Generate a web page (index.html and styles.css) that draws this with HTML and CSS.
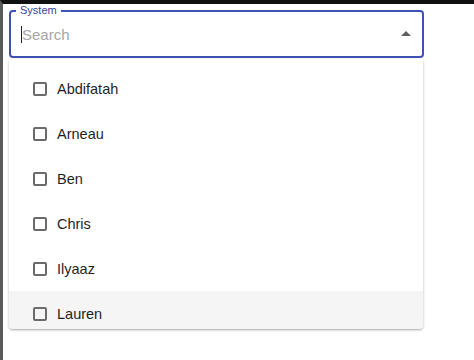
FILE: index.html
```html
<!DOCTYPE html>
<html>
<head>
<meta charset="utf-8">
<link rel="stylesheet" href="styles.css">
</head>
<body>
<div class="frame">
  <div class="field">
    <fieldset class="outline">
      <legend class="legend">System</legend>
      <div class="input-row">
        <span class="caret"></span>
        <span class="placeholder">Search</span>
        <svg class="arrow" width="24" height="24" viewBox="0 0 24 24"><path d="M7 14l5-5 5 5z" fill="#5f5f5f"/></svg>
      </div>
    </fieldset>
  </div>
  <div class="paper">
    <ul class="list">
      <li class="option"><span class="box"></span><span class="label">Abdifatah</span></li>
      <li class="option"><span class="box"></span><span class="label">Arneau</span></li>
      <li class="option"><span class="box"></span><span class="label">Ben</span></li>
      <li class="option"><span class="box"></span><span class="label">Chris</span></li>
      <li class="option"><span class="box"></span><span class="label">Ilyaaz</span></li>
      <li class="option hover"><span class="box"></span><span class="label">Lauren</span></li>
    </ul>
  </div>
</div>
</body>
</html>
```

FILE: styles.css
```css
html, body {
  margin: 0;
  padding: 0;
  background: #ffffff;
}
body {
  font-family: "Liberation Sans", Arial, sans-serif;
  width: 474px;
  height: 360px;
  overflow: hidden;
}
.frame {
  box-sizing: border-box;
  height: 360px;
  border-top: 4px solid #111111;
  border-left: 3px solid #5a5a5a;
  padding: 0 0 0 6px;
}
.field {
  width: 415px;
}
.outline {
  margin: 0;
  padding: 0 12px 0 10px;
  border: 2px solid #3f51b5;
  border-radius: 4px;
  height: 54px;
  box-sizing: border-box;
}
.legend {
  font-size: 11px;
  color: #34449a;
  padding: 0 4px;
  margin-left: -5px;
  line-height: 13px;
}
.input-row {
  display: flex;
  align-items: center;
  height: 40px;
  margin-top: -3px;
}
.caret {
  width: 1px;
  height: 17px;
  background: #222;
}
.placeholder {
  font-size: 15px;
  color: #a6a6a6;
  flex: 1;
}
.arrow {
  margin-right: -8px;
}
.paper {
  margin-top: 1px;
  width: 414px;
  height: 270px;
  overflow: hidden;
  border-radius: 4px;
  background: #fff;
  box-shadow: 0 1px 3px rgba(0,0,0,0.25), 0 1px 1px rgba(0,0,0,0.12);
}
.list {
  list-style: none;
  margin: 0;
  padding: 7px 0 0 0;
}
.option {
  height: 45px;
  display: flex;
  align-items: center;
  padding-left: 24px;
  gap: 10px;
}
.option.hover {
  background: #f5f5f5;
}
.box {
  width: 14px;
  height: 14px;
  box-sizing: border-box;
  border: 2px solid #6b6b6b;
  border-radius: 2px;
}
.label {
  font-size: 14.5px;
  color: #1f1f1f;
}
```
